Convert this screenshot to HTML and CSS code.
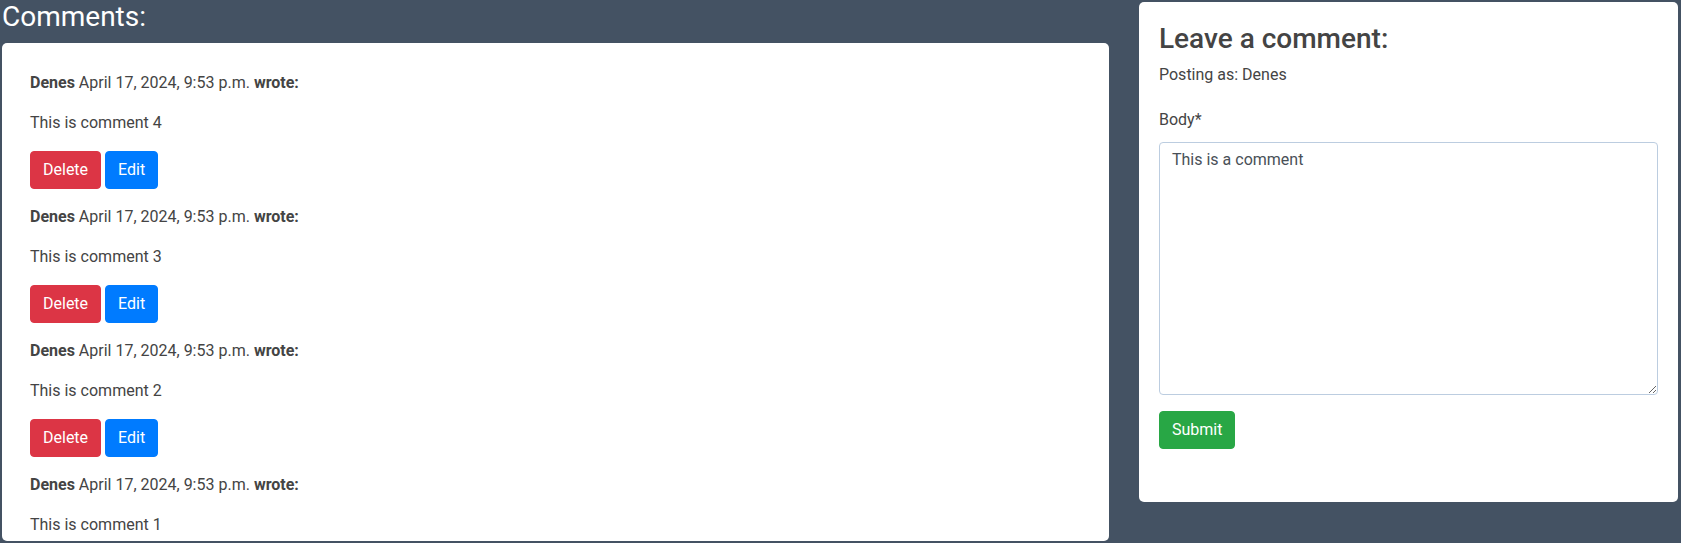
FILE: index.html
```html
<!DOCTYPE html>
<html lang="en">
<head>
<meta charset="utf-8">
<title>Comments</title>
<link rel="stylesheet" href="styles.css">
</head>
<body>
<div class="layout">
  <section class="comments-col">
    <h3 class="comments-title">Comments:</h3>
    <div class="card comments-card">
      <div class="comment">
        <p class="meta"><strong>Denes</strong> April 17, 2024, 9:53 p.m. <strong>wrote:</strong></p>
        <p class="body">This is comment 4</p>
        <div class="actions">
          <button class="btn btn-danger">Delete</button>
          <button class="btn btn-primary">Edit</button>
        </div>
      </div>
      <div class="comment">
        <p class="meta"><strong>Denes</strong> April 17, 2024, 9:53 p.m. <strong>wrote:</strong></p>
        <p class="body">This is comment 3</p>
        <div class="actions">
          <button class="btn btn-danger">Delete</button>
          <button class="btn btn-primary">Edit</button>
        </div>
      </div>
      <div class="comment">
        <p class="meta"><strong>Denes</strong> April 17, 2024, 9:53 p.m. <strong>wrote:</strong></p>
        <p class="body">This is comment 2</p>
        <div class="actions">
          <button class="btn btn-danger">Delete</button>
          <button class="btn btn-primary">Edit</button>
        </div>
      </div>
      <div class="comment">
        <p class="meta"><strong>Denes</strong> April 17, 2024, 9:53 p.m. <strong>wrote:</strong></p>
        <p class="body">This is comment 1</p>
      </div>
    </div>
  </section>
  <aside class="form-col">
    <div class="card form-card">
      <h3 class="form-title">Leave a comment:</h3>
      <p class="posting">Posting as: Denes</p>
      <form class="comment-form">
        <label class="field-label" for="id_body">Body*</label>
        <textarea id="id_body" class="field-input">This is a comment</textarea>
        <button type="button" class="btn btn-success">Submit</button>
      </form>
    </div>
  </aside>
</div>
</body>
</html>
```
FILE: styles.css
```css
html, body {
  margin: 0;
  padding: 0;
}
body {
  background: #445263;
  font-family: Roboto, "Liberation Sans", Arial, sans-serif;
  font-size: 16px;
  line-height: 1.5;
  color: #444;
  overflow: hidden;
}
.layout {
  display: grid;
  grid-template-columns: 1107px 1fr;
  column-gap: 30px;
  padding: 0 3px 0 2px;
  align-items: start;
}
.comments-title {
  margin: 0 0 9.4px 0;
  font-size: 28px;
  font-weight: 400;
  line-height: 1.2;
  color: #fff;
}
.card {
  background: #fff;
  border-radius: 5px;
}
.comments-card {
  height: 498px;
  overflow: hidden;
  padding: 28px 28px 0 28px;
  box-sizing: border-box;
}
.comment p {
  margin: 0 0 16px 0;
}
.actions {
  display: flex;
  gap: 4px;
  margin-bottom: 16px;
}
.btn {
  font-family: inherit;
  font-size: 16px;
  line-height: 1.5;
  padding: 6px 12px;
  border: 1px solid transparent;
  border-radius: 4px;
  color: #fff;
  cursor: pointer;
}
.btn-danger { background: #dc3545; border-color: #dc3545; }
.btn-primary { background: #007bff; border-color: #007bff; }
.btn-success { background: #28a745; border-color: #28a745; }
.form-col {
  padding-top: 2px;
}
.form-card {
  height: 500px;
  box-sizing: border-box;
  padding: 20px;
}
.form-title {
  margin: 0 0 7px 0;
  font-size: 28px;
  font-weight: 500;
  line-height: 1.2;
}
.posting {
  margin: 0 0 21px 0;
}
.comment-form {
  display: flex;
  flex-direction: column;
  align-items: flex-start;
}
.field-label {
  display: block;
  margin-bottom: 10px;
}
.field-input {
  display: block;
  width: 100%;
  box-sizing: border-box;
  height: 253px;
  padding: 5px 12px;
  font-family: inherit;
  font-size: 16px;
  line-height: 1.5;
  color: #495057;
  border: 1px solid #bccde0;
  border-radius: 4px;
  margin: 0 0 16px 0;
  outline: none;
}
```
